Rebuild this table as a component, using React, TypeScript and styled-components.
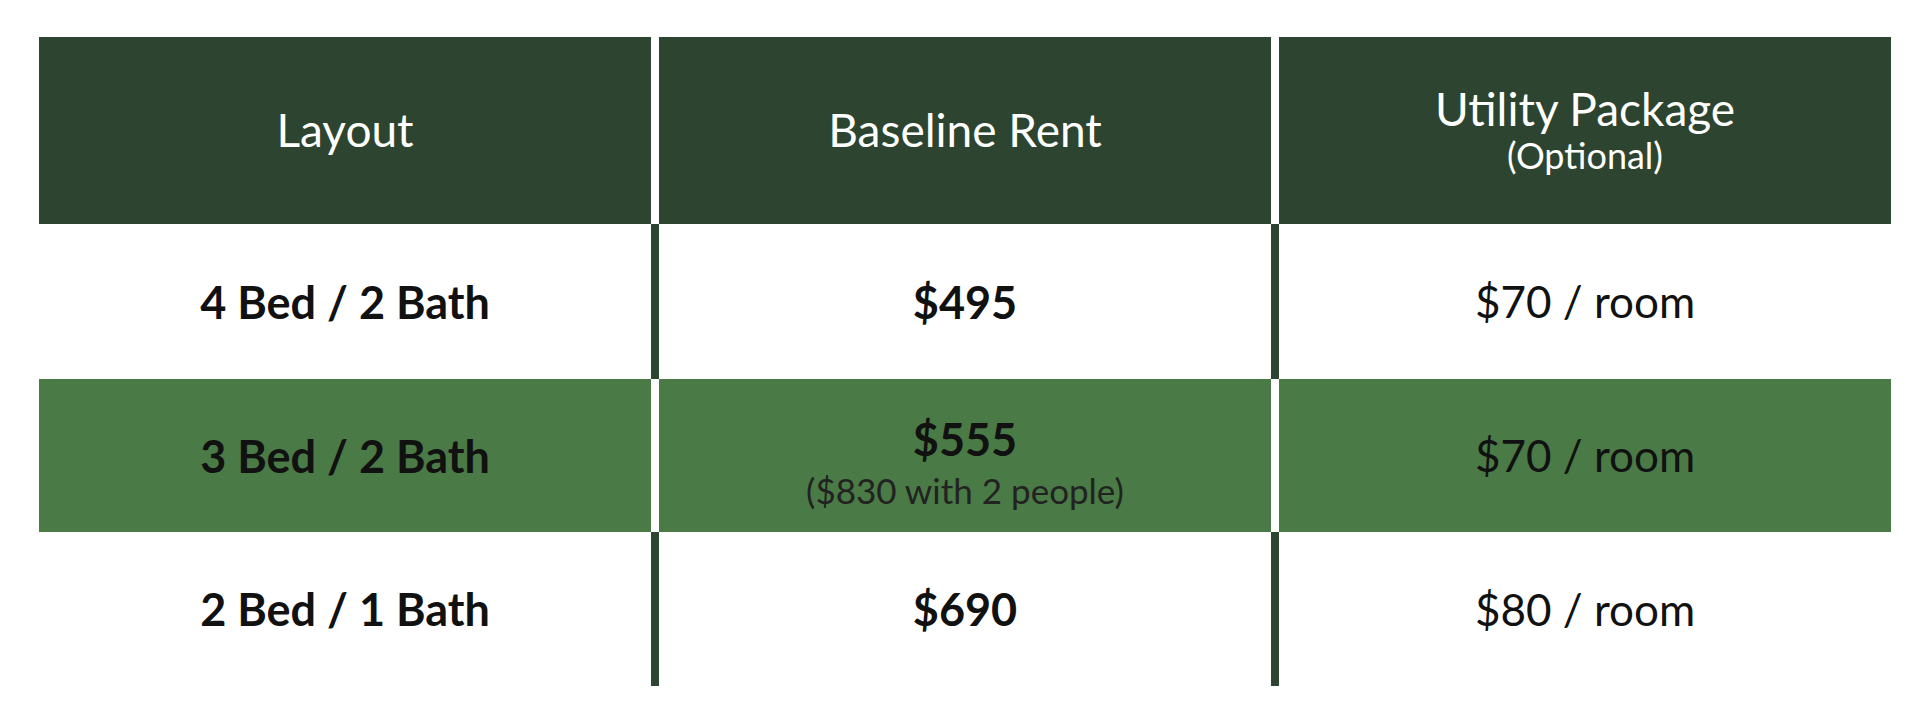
import React from 'react'
import styled, { createGlobalStyle } from 'styled-components'

const DARK = '#2d4430'
const GREEN = '#4a7a45'

const GlobalStyle = createGlobalStyle`
  html, body {
    margin: 0;
    padding: 0;
    background: #fff;
  }
  body {
    font-family: Lato, 'Open Sans', 'Liberation Sans', sans-serif;
  }
`

type RentRow = {
  layout: string
  rent: string
  note?: string
  utility: string
  shaded: boolean
  height: number
}

const rows: RentRow[] = [
  { layout: '4 Bed / 2 Bath', rent: '$495', utility: '$70 / room', shaded: false, height: 155 },
  {
    layout: '3 Bed / 2 Bath',
    rent: '$555',
    note: '($830 with 2 people)',
    utility: '$70 / room',
    shaded: true,
    height: 153,
  },
  { layout: '2 Bed / 1 Bath', rent: '$690', utility: '$80 / room', shaded: false, height: 154 },
]

const App: React.FC = () => {
  return (
    <>
      <GlobalStyle />
      <Page>
        <Table>
          <Row gapColor="#fff" height={187}>
            <HeadCell>Layout</HeadCell>
            <HeadCell>Baseline Rent</HeadCell>
            <HeadCell>
              Utility Package
              <HeadSub>(Optional)</HeadSub>
            </HeadCell>
          </Row>
          {rows.map((r, i) => (
            <Row key={i} gapColor={r.shaded ? '#fff' : DARK} height={r.height}>
              <Cell shaded={r.shaded}>
                <Strong>{r.layout}</Strong>
              </Cell>
              <Cell shaded={r.shaded}>
                <Strong>{r.rent}</Strong>
                {r.note && <Note>{r.note}</Note>}
              </Cell>
              <Cell shaded={r.shaded}>
                <Plain>{r.utility}</Plain>
              </Cell>
            </Row>
          ))}
        </Table>
      </Page>
    </>
  )
}

export default App

const Page = styled.div`
  width: 1928px;
  height: 726px;
  padding: 37px 37px 0 39px;
  box-sizing: border-box;
`

const Table = styled.div`
  width: 1852px;
  display: flex;
  flex-direction: column;
`

const Row = styled.div<{ gapColor: string; height: number }>`
  display: grid;
  grid-template-columns: repeat(3, 1fr);
  column-gap: 8px;
  height: ${props => props.height}px;
  background: ${props => props.gapColor};
`

const HeadCell = styled.div`
  background: ${DARK};
  color: #fff;
  display: flex;
  flex-direction: column;
  align-items: center;
  justify-content: center;
  font-size: 46px;
  line-height: 1.1;
`

const HeadSub = styled.span`
  font-size: 36px;
  line-height: 1.2;
`

const Cell = styled.div<{ shaded: boolean }>`
  background: ${props => (props.shaded ? GREEN : '#fff')};
  color: #111;
  display: flex;
  flex-direction: column;
  align-items: center;
  justify-content: center;
`

const Strong = styled.span`
  font-size: 45px;
  font-weight: 700;
  line-height: 1.2;
`

const Plain = styled.span`
  font-size: 44px;
  line-height: 1.2;
`

const Note = styled.span`
  font-size: 35px;
  color: #222;
  line-height: 1.2;
  margin-top: 3px;
  margin-bottom: -12px;
`
